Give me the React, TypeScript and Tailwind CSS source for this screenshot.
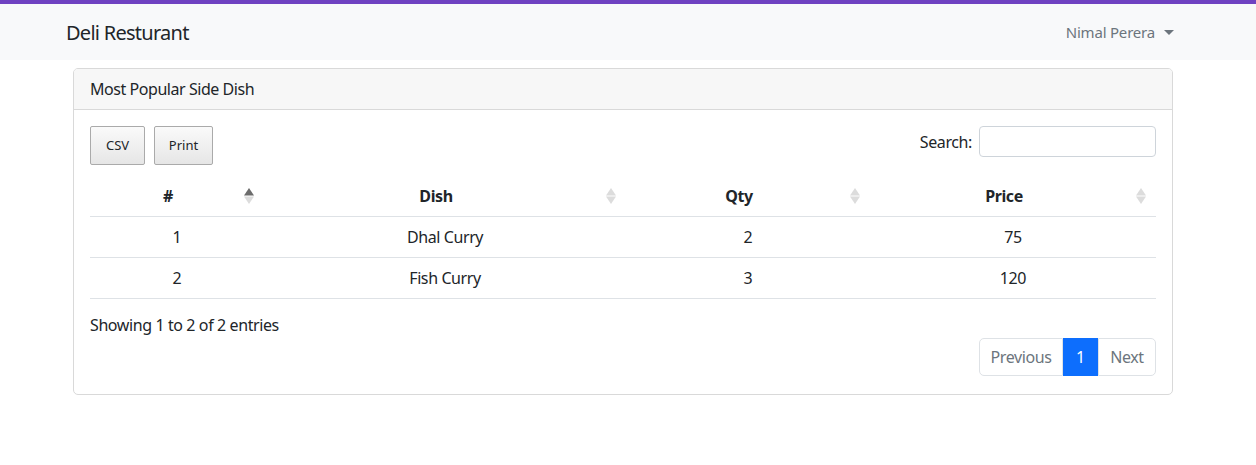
import React from "react";

const SortIcon = ({ active }: { active?: boolean }) => (
  <svg width="10" height="18" viewBox="0 0 10 18" className="absolute right-[10px] top-1/2 -translate-y-1/2">
    <polygon points="5,1 10,8.5 0,8.5" fill={active ? "#6c6c6c" : "#dcdcdc"} />
    <polygon points="5,17 10,9.5 0,9.5" fill="#dcdcdc" />
  </svg>
);

const rows = [
  { id: 1, dish: "Dhal Curry", qty: 2, price: 75 },
  { id: 2, dish: "Fish Curry", qty: 3, price: 120 },
];

export default function App() {
  return (
    <div className="min-h-[465px] bg-white text-[#212529]" style={{ fontFamily: '"Noto Sans", "Open Sans", sans-serif' }}>
      <nav className="border-t-4 border-[#6f42c1] bg-[#f8f9fa] h-[60px] flex items-center justify-between pl-[66px] pr-[82px]">
        <span className="text-[20px] text-[#212529] tracking-[-0.73px] mt-[2px]">Deli Resturant</span>
        <span className="flex items-center text-[15px] text-[#6c757d] tracking-[-0.2px]">
          Nimal Perera
          <span className="ml-[9px] inline-block w-0 h-0 border-l-[5px] border-r-[5px] border-t-[5px] border-l-transparent border-r-transparent border-t-[#6c757d]" />
        </span>
      </nav>
      <div className="pl-[73px] pt-[8px] w-[1173px]">
        <div className="border border-[#d9d9d9] rounded-[5px] overflow-hidden">
          <div className="bg-[#f7f7f7] border-b border-[#d9d9d9] h-[41px] flex items-center px-[16px] text-[16px] tracking-[-0.45px]">
            Most Popular Side Dish
          </div>
          <div className="px-[16px] pt-[16px] pb-[18px]">
            <div className="flex items-start justify-between">
              <div className="flex gap-[9px]">
                <button className="h-[39px] w-[55px] text-[13px] border border-[#aaa] rounded-[2px] bg-gradient-to-b from-[#fafafa] to-[#e6e6e6] text-[#212529]">CSV</button>
                <button className="h-[39px] w-[59px] text-[13px] border border-[#aaa] rounded-[2px] bg-gradient-to-b from-[#fafafa] to-[#e6e6e6] text-[#212529]">Print</button>
              </div>
              <label className="flex items-center text-[16px] tracking-[-0.4px]">
                Search:
                <input className="ml-[7px] w-[177px] h-[31px] border border-[#ced4da] rounded-[4px]" />
              </label>
            </div>
            <table className="w-full mt-[12px] border-collapse text-[16px]">
              <thead>
                <tr className="border-b border-[#dee2e6]">
                  <th className="relative w-[174px] h-[39px] font-bold text-center pr-[18px] tracking-[-0.4px]">#<SortIcon active /></th>
                  <th className="relative w-[362px] h-[39px] font-bold text-center pr-[18px] tracking-[-0.4px]">Dish<SortIcon /></th>
                  <th className="relative w-[244px] h-[39px] font-bold text-center pr-[18px] tracking-[-0.4px]">Qty<SortIcon /></th>
                  <th className="relative h-[39px] font-bold text-center pr-[18px] tracking-[-0.4px]">Price<SortIcon /></th>
                </tr>
              </thead>
              <tbody>
                {rows.map((r) => (
                  <tr key={r.id} className="border-b border-[#dee2e6]">
                    <td className="h-[41px] text-center tracking-[-0.4px]">{r.id}</td>
                    <td className="h-[41px] text-center tracking-[-0.4px]">{r.dish}</td>
                    <td className="h-[41px] text-center tracking-[-0.4px]">{r.qty}</td>
                    <td className="h-[41px] text-center tracking-[-0.4px]">{r.price}</td>
                  </tr>
                ))}
              </tbody>
            </table>
            <div className="mt-[16px] text-[16px] tracking-[-0.4px] leading-[20px]">Showing 1 to 2 of 2 entries</div>
            <div className="flex justify-end mt-[3px]">
              <div className="flex h-[38px] text-[16px] tracking-[-0.4px]">
                <span className="flex items-center justify-center w-[84px] border border-[#dee2e6] rounded-l-[5px] text-[#6c757d]">Previous</span>
                <span className="flex items-center justify-center w-[35px] bg-[#0d6efd] text-white">1</span>
                <span className="flex items-center justify-center w-[58px] border border-[#dee2e6] rounded-r-[5px] text-[#6c757d]">Next</span>
              </div>
            </div>
          </div>
        </div>
      </div>
    </div>
  );
}
